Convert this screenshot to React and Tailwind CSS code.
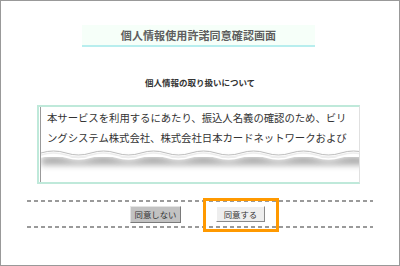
import React from 'react';

const jp = { fontFamily: '"Noto Sans CJK JP", "Noto Sans", sans-serif' };

function wavePath(y, amp, period, width) {
  let d = `M0 ${y}`;
  for (let x = 0; x < width; x += period) {
    d += ` q${period / 4} ${-amp} ${period / 2} 0 t${period / 2} 0`;
  }
  return d;
}

function TornWave() {
  return (
    <svg width="320" height="32" viewBox="0 0 320 32" className="block">
      <defs>
        <filter id="blur" x="-10%" y="-80%" width="120%" height="260%">
          <feGaussianBlur stdDeviation="3" />
        </filter>
      </defs>
      <path d={`${wavePath(13, 4, 50, 340)} L340 20 L0 20 Z`} fill="#7d7d7d" opacity="0.65" filter="url(#blur)" />
      <path d={`${wavePath(8, 4, 50, 340)} L340 12 L0 12 Z`} fill="#ffffff" />
      <path d={wavePath(12, 4, 50, 340)} fill="none" stroke="#ffffff" strokeWidth="1.5" />
      <path d={wavePath(8, 4, 50, 340)} fill="none" stroke="#bdbdbd" strokeWidth="1" />
      <path d={wavePath(10, 4, 50, 340)} fill="none" stroke="#ededed" strokeWidth="1.5" />
    </svg>
  );
}

function Dashed() {
  return <div className="mx-[26px] h-[2px] bg-[repeating-linear-gradient(to_right,#9a9a9a_0_4px,transparent_4px_7px)]" />;
}

export default function App() {
  return (
    <div className="flex h-[266px] w-[400px] flex-col border border-[#999] bg-white" style={jp}>
      <div className="mt-[24px] ml-[81px] flex h-[22px] w-[233px] items-center justify-center border-b-2 border-[#b8eeee] bg-[#f6fff9]">
        <span className="text-[11px] font-bold leading-none tracking-[0.1px] text-[#5e5e5e]">個人情報使用許諾同意確認画面</span>
      </div>

      <p className="mt-[29px] text-center text-[8.5px] font-bold leading-[12px] text-[#333]">個人情報の取り扱いについて</p>

      <div className="mt-[17px] ml-[36px] h-[79px] w-[323px] border-2 border-r border-[#bfe9da] border-r-[#e0e0e0]">
        <div className="ml-[1px] h-full overflow-hidden border-l border-l-[#9a9a9a] bg-white">
          <p className="pr-[8px] pl-[6px] pt-[1px] text-[10.4px] leading-[20px] tracking-[-0.05px] text-[#333]">
            本サービスを利用するにあたり、振込人名義の確認のため、ビリングシステム株式会社、株式会社日本カードネットワークおよび
          </p>
          <div className="-mt-[3px]">
            <TornWave />
          </div>
        </div>
      </div>

      <div className="mt-[16px]">
        <Dashed />
      </div>
      <div className="flex h-[24px] items-center gap-[35px] pl-[129px]">
        <button className="h-[17px] w-[51px] border border-t-[#e4e4e4] border-l-[#e4e4e4] border-r-[#7a7a7a] border-b-[#7a7a7a] bg-[#c2c2c2] text-[8.4px] leading-none text-[#333]">
          同意しない
        </button>
        <span className="relative flex">
          <span className="absolute -top-[8px] -bottom-[10px] -left-[13px] -right-[14px] border-[3px] border-[#ff9900]" />
          <button className="relative h-[16px] w-[49px] border border-t-[#fff] border-l-[#fff] border-r-[#8a8a8a] border-b-[#8a8a8a] bg-[#eeeeee] text-[8.4px] leading-none text-[#333]">
            同意する
          </button>
        </span>
      </div>
      <Dashed />
    </div>
  );
}
